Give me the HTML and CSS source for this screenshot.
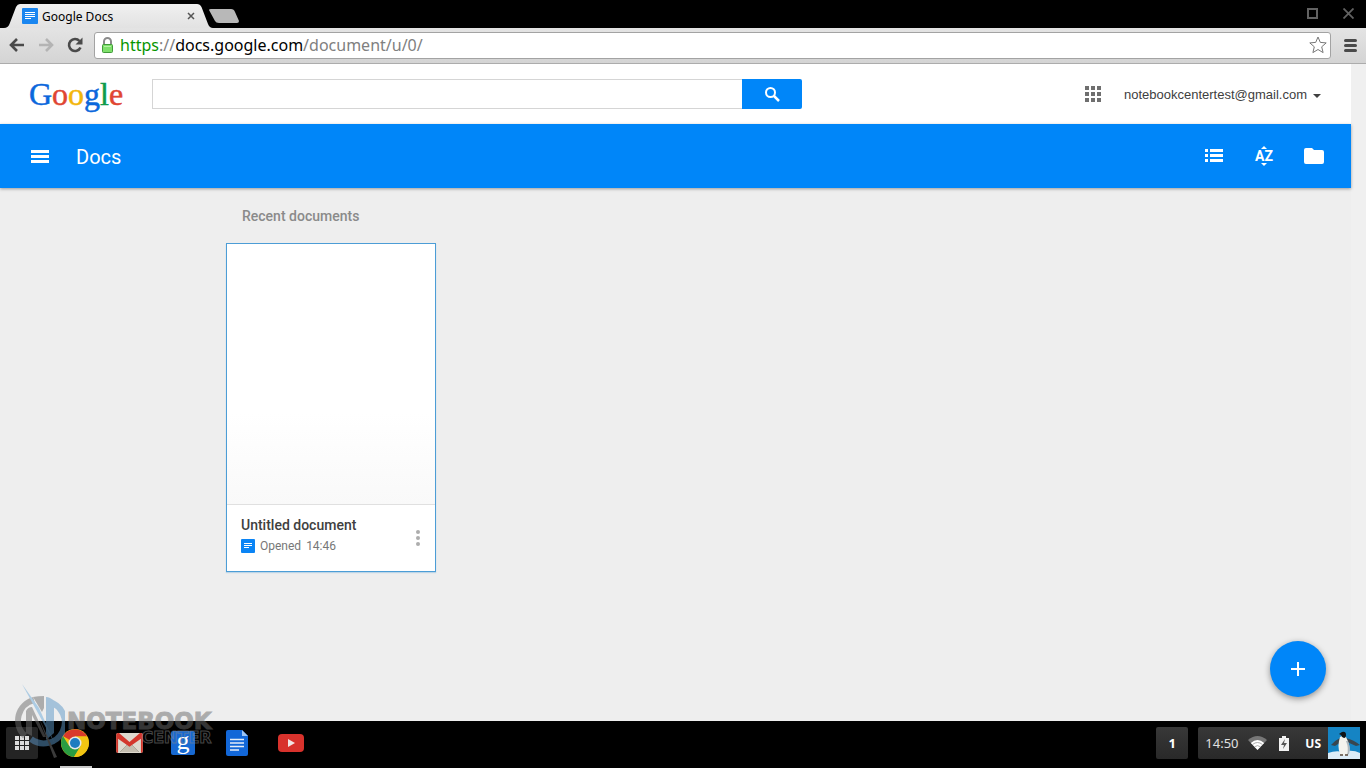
FILE: index.html
```
<!DOCTYPE html>
<html lang="en">
<head>
    <meta charset="UTF-8">
    <meta name="viewport" content="width=device-width, initial-scale=1.0">
    <title>Google Docs</title>
    <link rel="stylesheet" href="styles.css">
</head>
<body>
    <div class="tabstrip">
        <svg class="tab-shape" width="242" height="28" viewBox="0 0 242 28" aria-hidden="true">
            <defs>
                <linearGradient id="tabFill" x1="0" y1="0" x2="0" y2="1">
                    <stop offset="0" stop-color="#f0f0f0"/>
                    <stop offset="1" stop-color="#e2e2e2"/>
                </linearGradient>
            </defs>
            <path d="M0 28H4Q8 28 9.500 24L16 7Q17.500 4 20 4H197Q200 4 201.500 7L208 24Q209.500 28 213 28Z" fill="url(#tabFill)"/>
            <path d="M211 9H231Q234 9 235 12L239 21Q239 23 237 23H219Q216 23 215 21L209 10Q209 9 211 9Z" fill="#b8b8b8"/>
        </svg>
        <div class="tab">
            <svg width="16" height="16" viewBox="0 0 16 16" aria-hidden="true">
                <rect width="16" height="16" rx="1" fill="#1a86f0"/>
                <path d="M3 4.500h10M3 6.500h10M3 8.500h10M3 10.500h6" stroke="#fff"/>
            </svg>
            <span class="tab-title">Google Docs</span>
            <button class="plain" aria-label="Close tab">
                <svg width="8" height="8" viewBox="0 0 8 8"><path d="M1 1l6 6M7 1l-6 6" stroke="#555" stroke-width="1.500"/></svg>
            </button>
        </div>
        <div class="window-buttons">
            <button class="plain" aria-label="Maximize">
                <svg width="11" height="11" viewBox="0 0 11 11"><rect x="1" y="1" width="9" height="9" fill="none" stroke="#626262" stroke-width="2"/></svg>
            </button>
            <button class="plain" aria-label="Close window">
                <svg width="11" height="11" viewBox="0 0 11 11"><path d="M.5.5l10 10M10.500.5l-10 10" stroke="#626262" stroke-width="1.800"/></svg>
            </button>
        </div>
    </div>

    <div class="toolbar">
        <button class="plain" aria-label="Back">
            <svg width="16" height="14" viewBox="0 0 16 14"><path d="M15 7H3M8 1L2 7l6 6" fill="none" stroke="#4a4a4a" stroke-width="2.600"/></svg>
        </button>
        <button class="plain" aria-label="Forward">
            <svg width="16" height="14" viewBox="0 0 16 14"><path d="M1 7h12M8 1l6 6-6 6" fill="none" stroke="#b4b4b4" stroke-width="2.600"/></svg>
        </button>
        <button class="plain" aria-label="Reload">
            <svg width="16" height="16" viewBox="0 0 16 16"><path d="M12.500 4A6 6 0 1 0 13.500 10.500" fill="none" stroke="#4a4a4a" stroke-width="2.600"/><path d="M15.500.5V7.500H8.500Z" fill="#4a4a4a"/></svg>
        </button>
        <div class="omnibox">
            <svg width="13" height="16" viewBox="0 0 13 16" aria-hidden="true">
                <path d="M3 8V4.500a3.500 3.500 0 0 1 7 0V8" fill="none" stroke="#8b8b8b" stroke-width="2"/>
                <rect x="1.500" y="7.500" width="10" height="8" rx="1" fill="#7fe06b" stroke="#419a3a"/>
                <path d="M3 9.500h7" stroke="#b4f2a6"/>
            </svg>
            <span class="url"><span class="secure">https</span>://<span class="host">docs.google.com</span>/document/u/0/</span>
            <button class="plain" aria-label="Bookmark this page">
                <svg width="18" height="18" viewBox="0 0 18 18"><path d="M9 1l2.300 5.400 5.900.5-4.500 3.900 1.400 5.800L9 13.500l-5.100 3.100 1.400-5.800L.8 6.900l5.900-.5z" fill="#fff" stroke="#777" stroke-linejoin="round"/></svg>
            </button>
        </div>
        <button class="plain" aria-label="Chrome menu">
            <svg width="13" height="13" viewBox="0 0 13 13"><path d="M1.500 1.500h10M1.500 6.500h10M1.500 11.500h10" stroke="#4a4a4a" stroke-width="3" stroke-linecap="round"/></svg>
        </button>
    </div>

    <div class="page">
        <div class="content">
            <header class="google-bar">
                <a class="logo" href="#"><span class="blue">G</span><span class="red">o</span><span class="yellow">o</span><span class="blue">g</span><span class="green">l</span><span class="red">e</span></a>
                <form class="search">
                    <input type="text" aria-label="Search">
                    <button type="button" aria-label="Search">
                        <svg width="18" height="18" viewBox="0 0 18 18"><circle cx="7.500" cy="7.500" r="4.500" fill="none" stroke="#fff" stroke-width="2"/><path d="M10.500 10.500l5.500 5.500" stroke="#fff" stroke-width="2.500"/></svg>
                    </button>
                </form>
                <button class="plain apps" aria-label="Apps">
                    <svg width="16" height="16" viewBox="0 0 16 16" fill="#6f6f6f"><path d="M0 0h4v4H0zM6 0h4v4H6zM12 0h4v4h-4zM0 6h4v4H0zM6 6h4v4H6zM12 6h4v4h-4zM0 12h4v4H0zM6 12h4v4H6zM12 12h4v4h-4z"/></svg>
                </button>
                <a class="account" href="#">notebookcentertest@gmail.com
                    <svg width="8" height="4" viewBox="0 0 8 4" aria-hidden="true"><path d="M0 0h8L4 4z" fill="#404040"/></svg>
                </a>
            </header>

            <nav class="docs-bar">
                <button class="plain" aria-label="Main menu">
                    <svg width="18" height="13" viewBox="0 0 18 13"><path d="M0 0h18v3H0zM0 5h18v3H0zM0 10h18v3H0z" fill="#fff"/></svg>
                </button>
                <h1>Docs</h1>
                <button class="plain" aria-label="List view">
                    <svg width="18" height="14" viewBox="0 0 18 14"><path d="M0 0h3v3H0zM5 0h13v3H5zM0 5h3v3H0zM5 5h13v3H5zM0 10h3v3H0zM5 10h13v3H5z" fill="#fff"/></svg>
                </button>
                <button class="plain sort" aria-label="Sort">
                    <svg width="6" height="3" viewBox="0 0 6 3"><path d="M0 3h6L3 0z" fill="#fff"/></svg>
                    <span>AZ</span>
                    <svg width="6" height="3" viewBox="0 0 6 3"><path d="M0 0h6L3 3z" fill="#fff"/></svg>
                </button>
                <button class="plain" aria-label="Open file picker">
                    <svg width="20" height="16" viewBox="0 0 20 16"><path d="M2 0h6l2 2h8q2 0 2 2v10q0 2-2 2H2q-2 0-2-2V2q0-2 2-2z" fill="#fff"/></svg>
                </button>
            </nav>

            <main class="documents">
                <h2>Recent documents</h2>
                <article class="card">
                    <div class="preview"></div>
                    <div class="details">
                        <div class="info">
                            <h3>Untitled document</h3>
                            <p>
                                <svg width="14" height="14" viewBox="0 0 14 14" aria-hidden="true"><rect width="14" height="14" rx="1" fill="#0a84f5"/><path d="M3 4.500h8M3 6.500h8M3 8.500h5" stroke="#fff"/></svg>
                                <span>Opened</span>
                                <time>14:46</time>
                            </p>
                        </div>
                        <button class="plain" aria-label="More actions">
                            <svg width="4" height="16" viewBox="0 0 4 16" fill="#adadad"><circle cx="2" cy="2" r="2"/><circle cx="2" cy="8" r="2"/><circle cx="2" cy="14" r="2"/></svg>
                        </button>
                    </div>
                </article>
            </main>

            <button class="create" aria-label="New document">
                <svg width="14" height="14" viewBox="0 0 14 14"><path d="M7 0v14M0 7h14" stroke="#fff" stroke-width="2"/></svg>
            </button>
        </div>
        <div class="scroll-track"></div>
    </div>

    <footer class="shelf">
        <button class="launcher" aria-label="App launcher">
            <svg width="14" height="14" viewBox="0 0 14 14" fill="#dcdcdc"><path d="M0 0h4v4H0zM5 0h4v4H5zM10 0h4v4h-4zM0 5h4v4H0zM5 5h4v4H5zM10 5h4v4h-4zM0 10h4v4H0zM5 10h4v4H5zM10 10h4v4h-4z"/></svg>
        </button>
        <button class="app running" aria-label="Chrome">
            <svg width="28" height="28" viewBox="0 0 28 28">
                <circle cx="14" cy="14" r="14" fill="#f2c512"/>
                <path d="M14 14L1.900 7A14 14 0 0 1 26.100 7.500H14z" fill="#d93a2b"/>
                <path d="M1.900 7A14 14 0 0 0 13 28L19.600 17.200 14 14 8.400 17.200z" fill="#2a9c42"/>
                <path d="M14 7.500h12.100A14 14 0 0 1 13 28l6.600-10.800z" fill="#f2c512"/>
                <circle cx="14" cy="14" r="6.500" fill="#e8e8e8"/>
                <circle cx="14" cy="14" r="5" fill="#1f7cc0"/>
            </svg>
        </button>
        <button class="app" aria-label="Gmail">
            <svg width="27" height="20" viewBox="0 0 28 21">
                <rect width="28" height="21" rx="2" fill="#ded9ce"/>
                <path d="M4 20l10-9 10 9z" fill="#c4beb0"/>
                <path d="M4 20l8-8M24 20l-8-8" stroke="#aaa598"/>
                <path d="M0 2Q0 0 2 0H3l11 9.500L25 0h1q2 0 2 2v17q0 2-2 2V6L14 14.500 2 6v15q-2 0-2-2z" fill="#d3372c"/>
            </svg>
        </button>
        <button class="app search-app" aria-label="Google Search"><span>g</span></button>
        <button class="app" aria-label="Docs">
            <svg width="22" height="26" viewBox="0 0 22 26">
                <path d="M2 0h14l6 6v18q0 2-2 2H2q-2 0-2-2V2q0-2 2-2z" fill="#1267d8"/>
                <path d="M16 0l6 6h-6z" fill="#9cc4f5"/>
                <path d="M4 9.500h14M4 13h14M4 16.500h14M4 20h9" stroke="#e5edf7" stroke-width="1.500"/>
            </svg>
        </button>
        <button class="app" aria-label="YouTube">
            <svg width="26" height="18" viewBox="0 0 26 18"><rect width="26" height="18" rx="4" fill="#d8322c"/><path d="M10 5l7 4-7 4z" fill="#f1e5e4"/></svg>
        </button>

        <button class="notifications">1</button>
        <div class="tray">
            <time>14:50</time>
            <svg width="19" height="14" viewBox="0 0 19 14" aria-label="Wi-Fi">
                <path d="M0 4Q9.500-4 19 4L9.500 14z" fill="#777"/>
                <path d="M2.800 7Q9.500 1 16.200 7L9.500 14z" fill="#fff"/>
                <path d="M4.500 8.500q5-4 10 0M6.500 10.800q3-2.400 6 0" fill="none" stroke="#999" stroke-width=".8"/>
            </svg>
            <svg width="10" height="15" viewBox="0 0 10 15" aria-label="Battery charging">
                <path d="M3 0h4v2h3v13H0V2h3z" fill="#f2f2f2"/><path d="M6 3L2 9h3l-1 4 4-6H5z" fill="#555"/>
            </svg>
            <b>US</b>
            <svg class="avatar" width="32" height="32" viewBox="0 0 32 32" aria-label="User picture">
                <rect width="32" height="32" fill="#1584c4"/>
                <path d="M0 26q8-3 15-1 9-3 17 1v6H0z" fill="#dcecf7"/>
                <path d="M12 11Q6 14 3 18l4 1 6-4zM18 11q8 2 14 7l-4 1-9-4z" fill="#39464f"/>
                <path d="M12 10q3-2 6 0 5 9 3 17-4 3-9 0-3-8 0-17z" fill="#f3f3ee"/>
                <path d="M20 14q3 8 1 13l-2 1q2-7-1-14z" fill="#aeb8be"/>
                <path d="M11 7l3-2q4-1 4 3 0 3-2 3t-3-3z" fill="#101417"/>
                <path d="M12 28h3M17 28h3" stroke="#58483a" stroke-width="1.500"/>
            </svg>
        </div>
    </footer>

    <div class="watermark">
        <svg width="50" height="76" viewBox="0 0 50 76" aria-hidden="true">
            <path d="M19 16A21 21 0 0 0 10 52" fill="none" stroke="#6d6d6d" stroke-width="6"/>
            <path d="M18 13q5-1 11-1v12l-2 4z" fill="#6d6d6d"/>
            <path d="M11 49V27q2-4 6-4l14 30h-3L17 31v21z" fill="#6d6d6d"/>
            <path d="M34 18A21 21 0 1 1 16 55" fill="none" stroke="#5c97c8" stroke-width="6"/>
            <path d="M31 13q4 0 8 4v32l-8 7z" fill="#5c97c8"/>
            <path d="M7 0L24 24l16 36z" fill="#6cabdc"/>
            <path d="M24 34l18 39-3 1z" fill="#777"/>
        </svg>
        <div class="watermark-text">
            <span class="notebook">NOTEBOOK</span>
            <span class="center">CENTER</span>
        </div>
    </div>
</body>
</html>
```
FILE: styles.css
```
* {
    box-sizing: border-box;
}
body {
    margin: 0;
    height: 100vh;
    display: flex;
    flex-direction: column;
    overflow: hidden;
    background: black;
    font-family: "Noto Sans", sans-serif;
}
h1, h2, h3, p {
    margin: 0;
}
svg {
    display: block;
    flex: none;
}
a {
    text-decoration: none;
}
button {
    font-family: inherit;
    border: none;
    cursor: pointer;
}
.plain {
    padding: 0;
    background: none;
}

/* browser window */
.tabstrip {
    position: relative;
    display: flex;
    align-items: center;
    height: 28px;
    padding: 4px 12px 0 22px;
}
.tab-shape {
    position: absolute;
    top: 0;
    left: 0;
}
.tab {
    position: relative;
    display: flex;
    align-items: center;
    width: 173px;
    font-size: 12px;
}
.tab-title {
    flex: 1;
    margin-left: 4px;
}
.window-buttons {
    display: flex;
    gap: 25px;
    margin-left: auto;
    padding-bottom: 5px;
}
.toolbar {
    display: flex;
    align-items: center;
    gap: 13px;
    height: 36px;
    padding: 0 9px 1px;
    background: linear-gradient(#e4e4e4, #d4d4d4);
    border-bottom: 1px solid #acacac;
}
.omnibox {
    flex: 1;
    display: flex;
    align-items: center;
    height: 27px;
    margin-left: -2px;
    padding: 0 3px 0 6px;
    background: white;
    border: 1px solid #a3a3a3;
    border-radius: 3px;
}
.url {
    flex: 1;
    margin-left: 6px;
    color: #808080;
    font-size: 16px;
    line-height: 24px;
}
.secure {
    color: #079500;
}
.host {
    color: black;
}

/* page */
.page {
    flex: 1;
    display: flex;
    min-height: 0;
    background: #eeeeee;
}
.content {
    flex: 1;
    position: relative;
}
.scroll-track {
    width: 15px;
    background: #f0f0f0;
}
.google-bar {
    display: flex;
    align-items: center;
    height: 60px;
    padding: 0 30px 0 29px;
    background: white;
}
.logo {
    width: 123px;
    font-family: "Liberation Serif", serif;
    font-size: 32px;
    line-height: 40px;
    -webkit-text-stroke: 0.5px;
}
.blue { color: #0b67dc; }
.red { color: #e04632; }
.yellow { color: #f3b60b; }
.green { color: #109a4c; }
.search {
    display: flex;
    width: 650px;
    height: 30px;
}
.search input {
    flex: 1;
    min-width: 0;
    border: 1px solid #d5d5d5;
    border-right: none;
    outline: none;
}
.search button {
    display: flex;
    align-items: center;
    justify-content: center;
    width: 60px;
    padding: 0;
    background: #0086f9;
    border-radius: 0 2px 2px 0;
}
.apps {
    margin-left: auto;
}
.account {
    display: flex;
    align-items: center;
    gap: 6px;
    margin-left: 23px;
    color: #404040;
    font-family: "Liberation Sans", sans-serif;
    font-size: 13px;
}
.account svg {
    margin-top: 3px;
}
.docs-bar {
    position: relative;
    display: flex;
    align-items: center;
    height: 64px;
    padding: 0 27px 0 31px;
    background: #0086f9;
    box-shadow: 0 1px 3px rgba(0, 0, 0, 0.35);
    color: white;
    font-family: Roboto, sans-serif;
}
.docs-bar h1 {
    flex: 1;
    margin-left: 27px;
    padding-top: 1px;
    font-size: 20px;
    font-weight: 400;
}
.sort {
    display: flex;
    flex-direction: column;
    align-items: center;
    width: 18px;
    margin: 0 31px 0 32px;
    color: white;
    font-family: Roboto, sans-serif;
    font-size: 14px;
    font-weight: 700;
    line-height: 14px;
}
.documents {
    max-width: 899px;
    margin: 0 auto;
    font-family: Roboto, sans-serif;
}
.documents h2 {
    padding: 18px 16px 17px;
    color: #8a8a8a;
    font-size: 14px;
    font-weight: 500;
    line-height: 20px;
}
.card {
    width: 210px;
    background: white;
    border: 1px solid #4c9dd6;
    box-shadow: 0 1px 1px rgba(76, 157, 214, 0.3);
}
.preview {
    height: 261px;
    background: linear-gradient(white 65%, #f9f9f9);
    border-bottom: 1px solid #e0e0e0;
}
.details {
    display: flex;
    align-items: flex-end;
    justify-content: space-between;
    padding: 10px 15px 15px 14px;
}
.details button {
    padding-bottom: 10px;
}
.details h3 {
    color: #404040;
    font-size: 14px;
    font-weight: 500;
    line-height: 20px;
}
.details p {
    display: flex;
    align-items: center;
    gap: 5px;
    padding-top: 1px;
    color: #777;
    font-size: 12px;
    line-height: 20px;
}
.create {
    position: absolute;
    right: 25px;
    bottom: 24px;
    display: flex;
    align-items: center;
    justify-content: center;
    width: 56px;
    height: 56px;
    background: #0086f9;
    border-radius: 50%;
    box-shadow: 0 2px 6px rgba(0, 0, 0, 0.4);
}

/* shelf */
.shelf {
    display: flex;
    align-items: flex-start;
    height: 47px;
    padding: 0 6px;
    background: black;
}
.launcher {
    display: flex;
    align-items: center;
    justify-content: center;
    width: 32px;
    height: 32px;
    margin: 6px 10px 0 0;
    padding: 0;
    background: #242424;
    border-radius: 2px;
}
.app {
    display: flex;
    align-items: center;
    justify-content: center;
    width: 54px;
    height: 47px;
    padding: 0 0 4px;
    background: none;
}
.running {
    position: relative;
}
.running::after {
    content: "";
    position: absolute;
    bottom: 0;
    left: 12px;
    width: 32px;
    height: 2px;
    background: #c8c8c8;
}
.search-app span {
    width: 24px;
    height: 24px;
    background: #1769d2;
    border-radius: 2px;
    color: white;
    font-family: "Liberation Serif", serif;
    font-size: 26px;
    line-height: 20px;
}
.notifications {
    width: 32px;
    height: 32px;
    margin: 6px 10px 0 auto;
    padding: 0;
    background: linear-gradient(#383838, #292929);
    border-radius: 2px;
    color: white;
    font-size: 13px;
    font-weight: 700;
}
.tray {
    display: flex;
    align-items: center;
    height: 32px;
    margin-top: 6px;
    padding-left: 7px;
    background: linear-gradient(#383838, #292929);
    border-radius: 2px;
    color: white;
    font-size: 13px;
}
.tray time {
    width: 43px;
    color: #e0e0e0;
}
.tray b {
    margin: 0 7px 0 16px;
    font-size: 12px;
}
.tray svg + svg {
    margin-left: 12px;
}

/* site mark, lies over the page and the shelf */
.watermark {
    position: absolute;
    left: 15px;
    bottom: 8px;
    display: flex;
    opacity: 0.5;
    pointer-events: none;
}
.watermark-text {
    display: flex;
    flex-direction: column;
    align-items: flex-end;
    padding: 26px 0 0 2px;
    color: #6b6b6b;
    font-family: "DejaVu Sans", sans-serif;
    font-weight: 700;
}
.notebook {
    font-size: 23px;
    line-height: 22px;
    -webkit-text-stroke: 1px;
}
.center {
    color: transparent;
    font-size: 16px;
    line-height: 12px;
    -webkit-text-stroke: 1px #8a8a8a;
}
```
